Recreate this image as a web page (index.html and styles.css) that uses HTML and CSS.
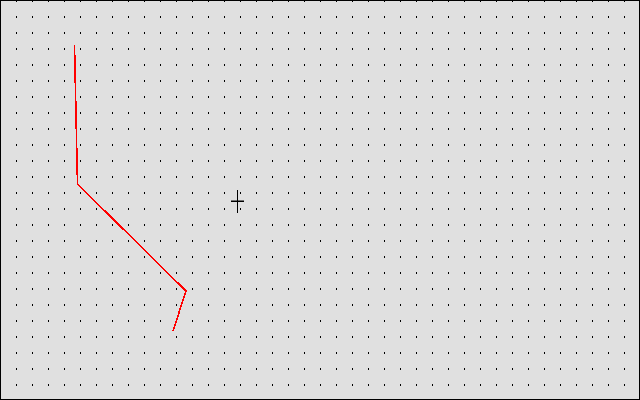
FILE: index.html
```html
<!DOCTYPE html>
<html>
<head>
<meta charset="utf-8">
<link rel="stylesheet" href="styles.css">
</head>
<body>
<div class="canvas">
  <svg class="board" width="640" height="400" viewBox="0 0 640 400" xmlns="http://www.w3.org/2000/svg">
    <defs>
      <pattern id="grid" width="16" height="16" patternUnits="userSpaceOnUse">
        <rect x="0" y="0" width="1" height="2" fill="#000"/>
      </pattern>
    </defs>
    <rect x="0" y="0" width="640" height="400" fill="#e0e0e0"/>
    <rect x="0" y="0" width="640" height="400" fill="url(#grid)"/>
    <polyline class="trace" points="74.5,45 77.5,184 186,291 173,331" />
    <g class="cursor">
      <rect x="237" y="190" width="1" height="23" fill="#000"/>
      <rect x="231" y="200.5" width="13" height="1.5" fill="#000"/>
    </g>
    <rect class="frame" x="0.5" y="0.5" width="639" height="399"/>
  </svg>
</div>
</body>
</html>
```

FILE: styles.css
```css
html, body {
  margin: 0;
  padding: 0;
  background: #e0e0e0;
  overflow: hidden;
}
.canvas {
  width: 640px;
  height: 400px;
}
.board {
  display: block;
}
.trace {
  fill: none;
  stroke: #ff0000;
  stroke-width: 1.6;
  stroke-linejoin: miter;
  shape-rendering: crispEdges;
}
.frame {
  fill: none;
  stroke: #000;
  stroke-width: 1;
}
```
